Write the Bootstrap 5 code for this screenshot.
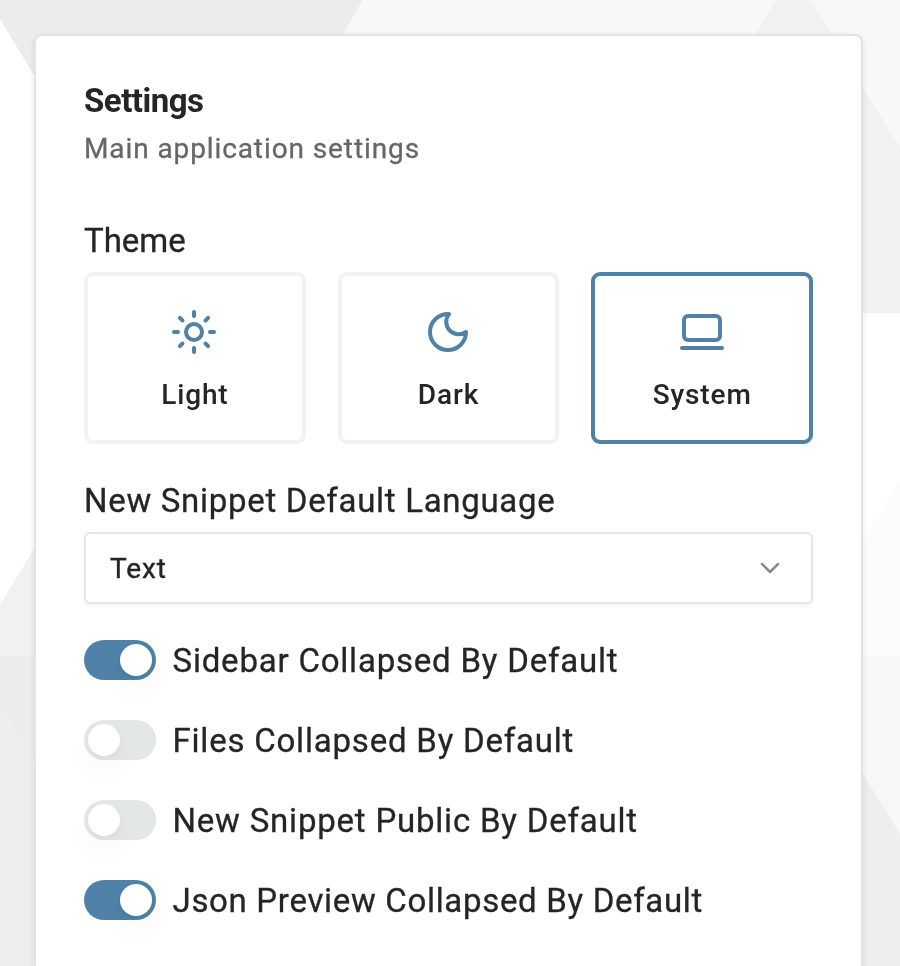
<!DOCTYPE html>
<html lang="en">
<head>
<meta charset="utf-8">
<meta name="viewport" content="width=device-width, initial-scale=1">
<title>Settings</title>
<link href="https://cdn.jsdelivr.net/npm/bootstrap@5.3.0/dist/css/bootstrap.min.css" rel="stylesheet">
<style>
  body { font-family: Roboto, "Liberation Sans", sans-serif; font-weight: 500; color: #252525; height: 966px; background: #fff; }
  .backdrop { z-index: -1; width: 900px; height: 966px; }
  .page { padding-top: 34px; }
  .panel { margin-left: 34px; margin-right: 37px; height: 932px; padding: 48px 48px 0; border: 2px solid #e3e3e3; border-bottom: 0; border-radius: 8px 8px 0 0; box-shadow: 0 2px 6px rgba(0,0,0,.09); }
  .panel-title { font-size: 33px; line-height: 42px; font-weight: 700; letter-spacing: -.5px; margin: -4px 0 -2px; }
  .panel-sub { font-size: 28px; line-height: 40px; color: #666; letter-spacing: .9px; margin: 0; padding-top: 9px; font-weight: 400; -webkit-text-stroke: .3px currentColor; }
  .field-label { font-size: 33px; line-height: 42px; letter-spacing: .7px; font-weight: 400; -webkit-text-stroke: .3px currentColor; }
  .field-label.theme-label { letter-spacing: 0; margin-top: 51px; }
  .theme-row { gap: 32px; margin-top: 10px; }
  .theme-tile { height: 172px; border: 4px solid #f1f3f3; border-radius: 9px; font-size: 28px; line-height: 40px; letter-spacing: .85px; font-weight: 500; background: #fff; color: #252525; padding: 6px 0 0; }
  .theme-tile.chosen { border-color: #5081a6; }
  .theme-tile svg { width: 48px; height: 48px; margin-bottom: 19px; margin-right: 1px; }
  .theme-tile.chosen svg { margin-right: 0; }
  .line-icon { fill: none; stroke: #5081a6; stroke-width: 4; stroke-linecap: round; stroke-linejoin: round; }
  .language-section { margin-top: 36px; }
  .language-box { height: 72px; margin-top: 10px; border: 2px solid #e3e8e7; border-radius: 6px; padding: 0 30px 0 24px; font-size: 28px; letter-spacing: .9px; font-weight: 400; background: #fff; color: #252525; box-shadow: 0 2px 4px rgba(0,0,0,.06); }
  .language-box span { -webkit-text-stroke: .4px currentColor; padding-top: 2px; }
  .switches { gap: 40px; margin-top: 36px; }
  .form-switch.toggle { height: 40px; min-height: 40px; gap: 16.5px; }
  .toggle .field-label { letter-spacing: .79px; padding-top: 2px; }
  .toggle:last-child .field-label { letter-spacing: .68px; }
  .toggle .form-check-input { width: 72px; height: 40px; border: 0; background: #e3e8e7; border-radius: 20px; padding: 4px; transition: none; }
  .toggle .form-check-input::before { content: ""; display: block; width: 32px; height: 32px; border-radius: 50%; background: #fff; box-shadow: 0 2px 6px rgba(0,0,0,.04), 0 14px 26px 4px rgba(0,0,0,.025); }
  .toggle .form-check-input:checked { background: #5081a6; }
  .toggle .form-check-input:checked::before { margin-left: 32px; }
</style>
</head>
<body class="overflow-hidden">
<svg class="backdrop position-fixed top-0 start-0" viewBox="0 0 900 966" aria-hidden="true">
  <path fill="#ececec" d="M0 0H363L303 102H50L0 19Z"/>
  <path fill="#f8f8f8" d="M363 0H900V147L863 88L800 60H328Z"/>
  <path fill="#f1f1f1" d="M776 0H811L832 34L840 50H746Z"/>
  <path fill="#f1f1f1" d="M850 67L863 88L900 147V313H850Z"/>
  <path fill="#fcfcfc" d="M900 480L850 563V656H900Z"/>
  <path fill="#f7f7f7" d="M850 656H900V834L850 752Z"/>
  <path fill="#eee" d="M850 752L900 834V966H850Z"/>
  <path fill="#f1f1f1" d="M0 605L50 522V656H0Z"/>
  <path fill="#ececec" d="M0 656H50V787L0 706Z"/>
  <path fill="#eee" d="M0 706L50 787V966H0Z"/>
</svg>
<div class="page">
<main class="panel bg-white">
  <h1 class="panel-title">Settings</h1>
  <p class="panel-sub">Main application settings</p>

  <section>
    <div class="field-label theme-label">Theme</div>
    <div class="theme-row d-flex">
      <button type="button" class="theme-tile flex-fill w-100 d-flex flex-column align-items-center justify-content-center">
        <svg class="line-icon" viewBox="0 0 48 48"><circle cx="24" cy="24" r="8"/><path d="M24 4v4M24 40v4M4 24h4M40 24h4M9.9 9.9l2.6 2.6M35.5 35.5l2.6 2.6M9.9 38.1l2.6-2.6M35.5 12.5l2.6-2.6"/></svg>
        <span>Light</span>
      </button>
      <button type="button" class="theme-tile flex-fill w-100 d-flex flex-column align-items-center justify-content-center">
        <svg class="line-icon" viewBox="0 0 48 48"><path d="M25 6A12.5 12.5 0 0 0 42 24A18 18 0 1 1 24 6Z"/></svg>
        <span>Dark</span>
      </button>
      <button type="button" class="theme-tile chosen flex-fill w-100 d-flex flex-column align-items-center justify-content-center">
        <svg class="line-icon" viewBox="0 0 48 48"><rect x="6" y="8" width="36" height="24" rx="4"/><path d="M4 40h40"/></svg>
        <span>System</span>
      </button>
    </div>
  </section>

  <section class="language-section">
    <div class="field-label">New Snippet Default Language</div>
    <button type="button" class="language-box w-100 d-flex align-items-center justify-content-between">
      <span>Text</span>
      <svg width="22" height="14" viewBox="0 0 22 14" fill="none" stroke="#8c8c8c" stroke-width="2.5" stroke-linecap="round" stroke-linejoin="round"><path d="M3 3l8 8 8-8"/></svg>
    </button>
  </section>

  <section class="switches d-flex flex-column">
    <label class="toggle form-check form-switch d-flex align-items-center p-0 m-0"><input class="form-check-input m-0" type="checkbox" role="switch" checked><span class="field-label">Sidebar Collapsed By Default</span></label>
    <label class="toggle form-check form-switch d-flex align-items-center p-0 m-0"><input class="form-check-input m-0" type="checkbox" role="switch"><span class="field-label">Files Collapsed By Default</span></label>
    <label class="toggle form-check form-switch d-flex align-items-center p-0 m-0"><input class="form-check-input m-0" type="checkbox" role="switch"><span class="field-label">New Snippet Public By Default</span></label>
    <label class="toggle form-check form-switch d-flex align-items-center p-0 m-0"><input class="form-check-input m-0" type="checkbox" role="switch" checked><span class="field-label">Json Preview Collapsed By Default</span></label>
  </section>
</main>
</div>
<script src="https://cdn.jsdelivr.net/npm/bootstrap@5.3.0/dist/js/bootstrap.bundle.min.js"></script>
</body>
</html>
